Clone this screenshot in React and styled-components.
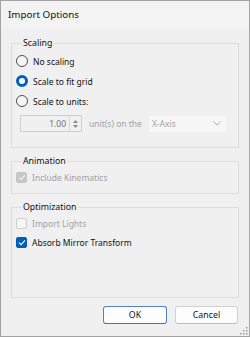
import React from 'react';
import styled, { createGlobalStyle } from 'styled-components';

const GlobalStyle = createGlobalStyle`
  html, body {
    margin: 0;
    padding: 0;
    background: #ffffff;
  }
  body {
    font-family: 'Noto Sans', 'Liberation Sans', sans-serif;
  }
`;

const Window = styled.div`
  width: 250px;
  height: 337px;
  box-sizing: border-box;
  border: 1px solid #a3a3a3;
  background: #f0f0f0;
  display: flex;
  flex-direction: column;
  position: relative;
  overflow: hidden;
`;

const TitleBar = styled.div`
  height: 27px;
  flex: none;
  display: flex;
  align-items: center;
  padding-left: 7px;
  background: #f3f3f3;
  color: #111111;
  font-size: 9.8px;
`;

const Body = styled.div`
  flex: 1;
  display: flex;
  flex-direction: column;
  padding: 9px 10px 0 10px;
`;

const Group = styled.fieldset`
  margin: ${(p) => p.$gap || 0}px 0 0 0;
  padding: ${(p) => p.$pad || '2px 4px 15px 4px'};
  border: 1px solid #dcdcdc;
  min-width: 0;
  display: flex;
  flex-direction: column;
`;

const Legend = styled.legend`
  margin-left: 6px;
  padding: 0 1px;
  font-size: 8.8px;
  line-height: 12px;
  color: #111111;
`;

const Row = styled.div`
  height: ${(p) => p.$h || 20}px;
  display: flex;
  align-items: center;
  gap: 5px;
  font-size: 8.5px;
  color: ${(p) => (p.$disabled ? '#a2a2a2' : '#111111')};
`;

const Radio = styled.span`
  width: 12px;
  height: 12px;
  box-sizing: border-box;
  border-radius: 50%;
  flex: none;
  border: ${(p) => (p.$on ? '3.5px solid #005fb8' : '1px solid #4f4f4f')};
  background: ${(p) => (p.$on ? '#ffffff' : '#f6f6f6')};
`;

const Check = styled.span`
  width: 11px;
  height: 11px;
  box-sizing: border-box;
  border-radius: 2px;
  flex: none;
  display: flex;
  align-items: center;
  justify-content: center;
  border: 1px solid ${(p) => p.$border};
  background: ${(p) => p.$bg};
`;

const UnitsRow = styled.div`
  margin-top: 4px;
  margin-left: 4px;
  height: 17px;
  display: flex;
  align-items: center;
  font-size: 8.5px;
  color: #a2a2a2;
`;

const Spin = styled.div`
  width: 62px;
  height: 17px;
  box-sizing: border-box;
  border: 1px solid #cfcfcf;
  background: #f0f0f0;
  display: flex;
  align-items: stretch;
`;

const SpinValue = styled.div`
  flex: 1;
  display: flex;
  align-items: center;
  justify-content: flex-end;
  padding-right: 3px;
  color: #707070;
`;

const SpinButtons = styled.div`
  width: 11px;
  border-left: 1px solid #dadada;
  display: flex;
  flex-direction: column;
  align-items: center;
  justify-content: center;
  gap: 2px;
`;

const UnitsLabel = styled.span`
  margin-left: 7px;
`;

const Combo = styled.div`
  margin-left: 7px;
  width: 77px;
  height: 16px;
  box-sizing: border-box;
  background: #f7f7f7;
  display: flex;
  align-items: center;
  justify-content: space-between;
  padding: 0 5px 0 3px;
  color: #a2a2a2;
`;

const Footer = styled.div`
  display: flex;
  justify-content: flex-end;
  gap: 8px;
  margin-top: 8px;
  padding-right: 1px;
`;

const Button = styled.button`
  width: ${(p) => p.$w}px;
  height: 18px;
  box-sizing: border-box;
  border-radius: 3px;
  background: #fdfdfd;
  border: 1px solid ${(p) => (p.$primary ? '#4f83c4' : '#d2d2d2')};
  border-bottom-color: ${(p) => (p.$primary ? '#3f74b8' : '#bdbdbd')};
  font-family: 'Noto Sans', 'Liberation Sans', sans-serif;
  font-size: 8.8px;
  color: #111111;
  padding: 0;
`;

const Grip = styled.svg`
  position: absolute;
  right: 1px;
  bottom: 1px;
`;

const Tick = ({ color }) => (
  <svg width="8" height="7" viewBox="0 0 8 7">
    <path d="M1 3.6 L3.1 5.6 L7 1.4" fill="none" stroke={color} strokeWidth="1.1" />
  </svg>
);

const Arrow = ({ up }) => (
  <svg width="5" height="3" viewBox="0 0 5 3">
    <path d={up ? 'M0 3 L2.5 0 L5 3 Z' : 'M0 0 L2.5 3 L5 0 Z'} fill="#8a8a8a" />
  </svg>
);

const App = () => (
  <>
    <GlobalStyle />
    <Window>
      <TitleBar>Import Options</TitleBar>
      <Body>
        <Group>
          <Legend>Scaling</Legend>
          <Row>
            <Radio />
            No scaling
          </Row>
          <Row>
            <Radio $on />
            Scale to fit grid
          </Row>
          <Row>
            <Radio />
            Scale to units:
          </Row>
          <UnitsRow>
            <Spin>
              <SpinValue>1.00</SpinValue>
              <SpinButtons>
                <Arrow up />
                <Arrow />
              </SpinButtons>
            </Spin>
            <UnitsLabel>unit(s) on the</UnitsLabel>
            <Combo>
              X-Axis
              <svg width="8" height="5" viewBox="0 0 8 5">
                <path d="M0.5 0.5 L4 4 L7.5 0.5" fill="none" stroke="#b0b0b0" strokeWidth="1" />
              </svg>
            </Combo>
          </UnitsRow>
        </Group>

        <Group $gap={7} $pad="0px 4px 6px 4px">
          <Legend>Animation</Legend>
          <Row $disabled>
            <Check $border="#c6c6c6" $bg="#c6c6c6">
              <Tick color="#f2f2f2" />
            </Check>
            Include Kinematics
          </Row>
        </Group>

        <Group $gap={7} $pad="1px 4px 45px 4px">
          <Legend>Optimization</Legend>
          <Row $h={19} $disabled>
            <Check $border="#cfcfcf" $bg="#f5f5f5" />
            Import Lights
          </Row>
          <Row $h={19}>
            <Check $border="#005fb8" $bg="#005fb8">
              <Tick color="#ffffff" />
            </Check>
            Absorb Mirror Transform
          </Row>
        </Group>

        <Footer>
          <Button $w={64} $primary>OK</Button>
          <Button $w={63}>Cancel</Button>
        </Footer>
      </Body>
      <Grip width="8" height="8" viewBox="0 0 8 8">
        <rect x="6" y="0" width="1.5" height="1.5" fill="#9a9a9a" />
        <rect x="3" y="3" width="1.5" height="1.5" fill="#9a9a9a" />
        <rect x="6" y="3" width="1.5" height="1.5" fill="#9a9a9a" />
        <rect x="0" y="6" width="1.5" height="1.5" fill="#9a9a9a" />
        <rect x="3" y="6" width="1.5" height="1.5" fill="#9a9a9a" />
        <rect x="6" y="6" width="1.5" height="1.5" fill="#9a9a9a" />
      </Grip>
    </Window>
  </>
);

export default App;
